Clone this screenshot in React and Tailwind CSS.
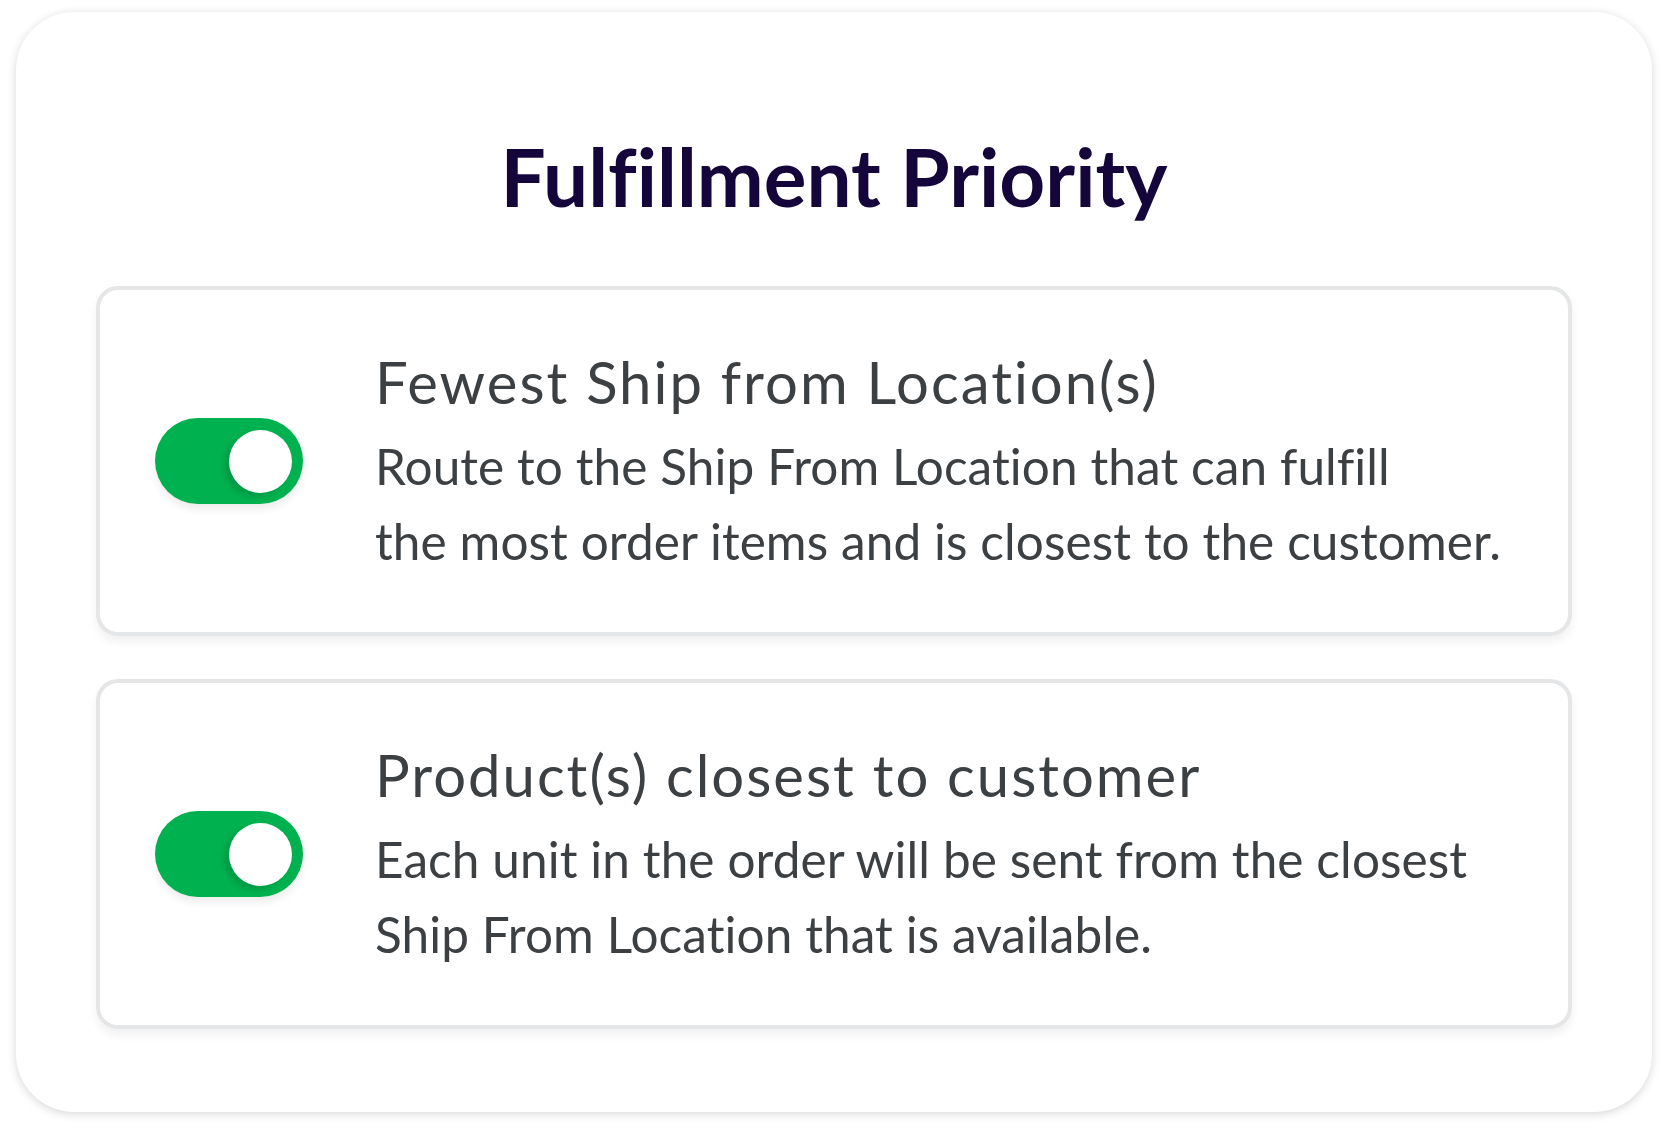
import { useState } from "react";

const options = [
    {
        id: "fewest",
        title: "Fewest Ship from Location(s)",
        lines: [
            "Route to the Ship From Location that can fulfill",
            "the most order items and is closest to the customer.",
        ],
    },
    {
        id: "closest",
        title: "Product(s) closest to customer",
        lines: [
            "Each unit in the order will be sent from the closest",
            "Ship From Location that is available.",
        ],
    },
];

function Toggle({ on, onChange }) {
    return (
        <button
            type="button"
            onClick={onChange}
            className={`flex h-[86px] w-[148px] shrink-0 items-center rounded-full pr-[11px] pl-[11px] shadow-[0_5px_8px_rgba(0,0,0,0.08)] ${
                on ? "justify-end bg-[#00b24f]" : "justify-start bg-[#d5d7da]"
            }`}
        >
            <span className="block h-[63px] w-[63px] rounded-full bg-white shadow-[-5px_4px_7px_rgba(0,0,0,0.14)]" />
        </button>
    );
}

function OptionCard({ option, on, onToggle }) {
    return (
        <div className="flex items-center rounded-[22px] border-4 border-[#e5e6e8] bg-white pl-[55px] shadow-[0_6px_10px_rgba(0,0,0,0.06)]">
            <Toggle on={on} onChange={onToggle} />
            <div className="ml-[72px] pt-[57px] pb-[53px] text-[#3d4043]">
                <h2 className="text-[58px] leading-[70px] font-normal tracking-[2px] whitespace-nowrap">{option.title}</h2>
                <p className="mt-[12px] text-[49.5px] leading-[75px] tracking-[0.1px] whitespace-nowrap">
                    {option.lines[0]}
                    <br />
                    {option.lines[1]}
                </p>
            </div>
        </div>
    );
}

export default function App() {
    const [enabled, setEnabled] = useState({ fewest: true, closest: true });

    return (
        <div className="min-h-screen bg-white pt-[12px] pl-[16px] font-['Lato',sans-serif] [font-variant-ligatures:none]">
            <div className="w-[1636px] rounded-[58px] bg-white px-[80px] pt-[124px] pb-[83px] shadow-[0_2px_10px_rgba(0,0,0,0.16)]">
                <h1 className="text-center text-[80px] leading-[80px] font-bold text-[#14063a]">
                    Fulfillment Priority
                </h1>
                <div className="mt-[70px] flex flex-col gap-[43px]">
                    {options.map((o) => (
                        <OptionCard
                            key={o.id}
                            option={o}
                            on={enabled[o.id]}
                            onToggle={() => setEnabled((s) => ({ ...s, [o.id]: !s[o.id] }))}
                        />
                    ))}
                </div>
            </div>
        </div>
    );
}
